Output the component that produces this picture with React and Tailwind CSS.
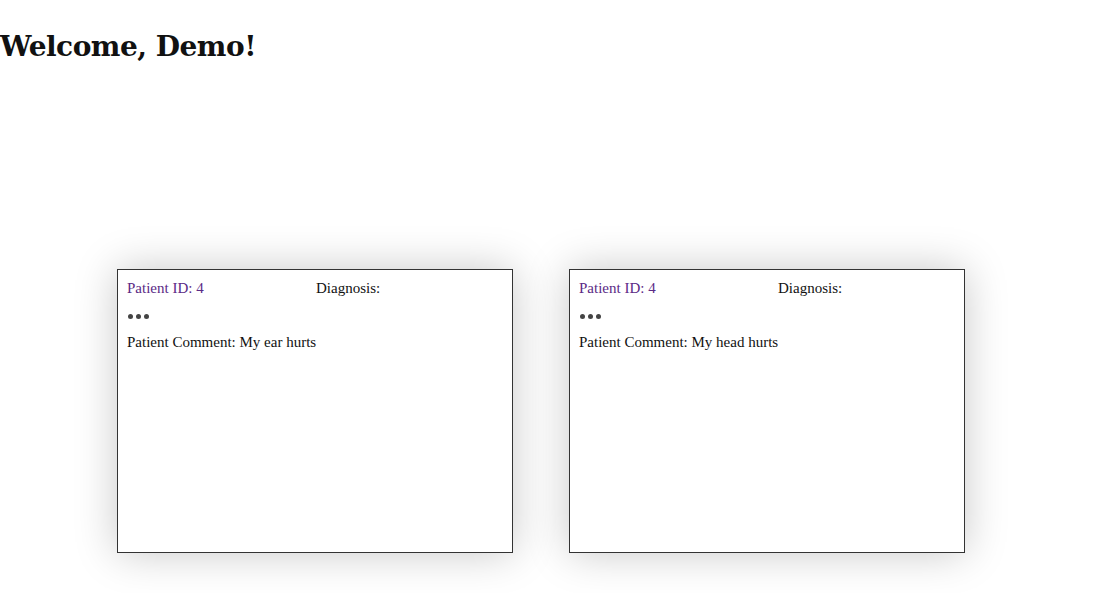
import React from "react";

const Card = ({ idWidth, comment }) => (
  <div className="w-[396px] h-[284px] border border-[#333] bg-white shadow-[0_0_40px_rgba(0,0,0,0.22)] px-[9px] pt-[10px] font-['Liberation_Serif',serif] text-[15px] leading-[17px] text-[#111]">
    <div className="flex">
      <span className="text-[#5b2a86]" style={{ width: idWidth }}>Patient ID: 4</span>
      <span>Diagnosis:</span>
    </div>
    <div className="flex gap-[3px] mt-[17px] ml-[1px] h-[5px]">
      <span className="w-[5px] h-[5px] rounded-full bg-[#444]" />
      <span className="w-[5px] h-[5px] rounded-full bg-[#444]" />
      <span className="w-[5px] h-[5px] rounded-full bg-[#444]" />
    </div>
    <div className="mt-[15px]">Patient Comment: {comment}</div>
  </div>
);

export default function App() {
  return (
    <div className="w-[1098px] h-[593px] bg-white overflow-hidden">
      <h1 className="pt-[29px] font-['DejaVu_Serif',serif] font-bold text-[28px] leading-[36px] tracking-[-0.5px] text-[#111]">
        Welcome, Demo!
      </h1>
      <div className="flex gap-[56px] pl-[117px] mt-[204px]">
        <Card idWidth={189} comment="My ear hurts" />
        <Card idWidth={199} comment="My head hurts" />
      </div>
    </div>
  );
}
